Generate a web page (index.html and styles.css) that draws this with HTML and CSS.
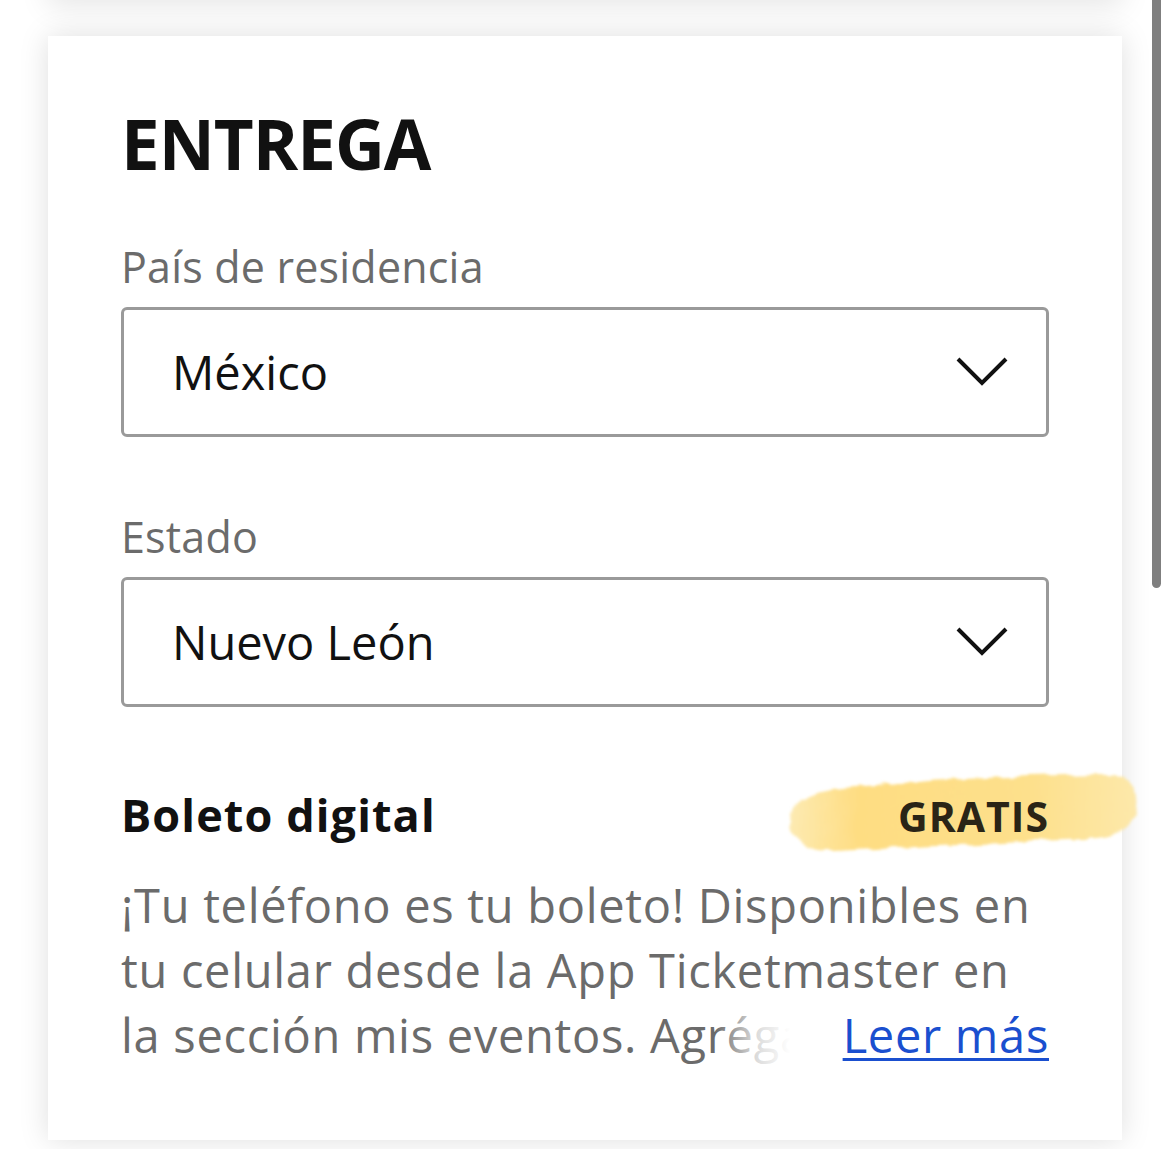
FILE: index.html
```html
<!DOCTYPE html>
<html lang="es">
<head>
<meta charset="utf-8">
<title>Entrega</title>
<link rel="stylesheet" href="styles.css">
</head>
<body>
<div class="page">
  <div class="prev-card"></div>
  <section class="card">
    <h1 class="title">ENTREGA</h1>

    <div class="field">
      <label class="label">País de residencia</label>
      <div class="select">
        <span class="value">México</span>
        <svg class="chev" width="52" height="30" viewBox="0 0 52 30"><path d="M2 2 L26 26 L50 2" fill="none" stroke="#111" stroke-width="4"/></svg>
      </div>
    </div>

    <div class="field">
      <label class="label">Estado</label>
      <div class="select">
        <span class="value">Nuevo León</span>
        <svg class="chev" width="52" height="30" viewBox="0 0 52 30"><path d="M2 2 L26 26 L50 2" fill="none" stroke="#111" stroke-width="4"/></svg>
      </div>
    </div>

    <div class="delivery">
      <div class="delivery-head">
        <svg class="brush" width="358" height="86" viewBox="0 0 358 86">
          <defs>
            <filter id="rough" x="-5%" y="-10%" width="110%" height="120%">
              <feTurbulence type="fractalNoise" baseFrequency="0.06" numOctaves="3" seed="4" result="n"/>
              <feDisplacementMap in="SourceGraphic" in2="n" scale="7" xChannelSelector="R" yChannelSelector="G" result="d"/>
              <feGaussianBlur in="d" stdDeviation="1.6"/>
            </filter>
            <linearGradient id="ink" x1="0" y1="0" x2="1" y2="0">
              <stop offset="0" stop-color="#fdeab2"/>
              <stop offset="0.2" stop-color="#fedd82"/>
              <stop offset="0.7" stop-color="#fde08c"/>
              <stop offset="1" stop-color="#fde8aa"/>
            </linearGradient>
          </defs>
          <path filter="url(#rough)" fill="url(#ink)" d="M5 54 C5 34 22 24 60 19 C140 11 230 7 322 5 C348 5 354 22 352 38 C350 60 338 68 300 70 C220 74 130 78 52 82 C22 83 5 72 5 54 Z"/>
        </svg>
        <h2 class="delivery-name">Boleto digital</h2>
        <span class="price">GRATIS</span>
      </div>
      <div class="desc-wrap">
        <p class="desc">¡Tu teléfono es tu boleto! Disponibles en tu celular desde la App Ticketmaster en la sección mis eventos. Agrégalos a tu Wallet y preséntalos en la entrada del recinto.</p>
        <span class="more"><a href="#" class="more-link">Leer más</a></span>
      </div>
    </div>
  </section>
</div>
<div class="scrollbar"></div>
</body>
</html>
```

FILE: styles.css
```css
html, body {
  margin: 0;
  padding: 0;
  background: #ffffff;
  overflow: hidden;
}
body {
  font-family: "Open Sans", "Noto Sans", sans-serif;
  height: 1149px;
}
.page {
  padding: 0 48px;
}
.prev-card {
  height: 40px;
  margin-top: -40px;
  background: #fff;
  box-shadow: 0 6px 30px rgba(0,0,0,0.10);
}
.card {
  margin-top: 36px;
  background: #fff;
  box-shadow: 0 0 28px rgba(0,0,0,0.13);
  padding: 72px 73px 60px 73px;
  height: 1104px;
  box-sizing: border-box;
}
.title {
  margin: 0;
  font-size: 69px;
  font-weight: 700;
  letter-spacing: -1px;
  color: #111;
  line-height: 70px;
}
.title + .field {
  margin-top: 67px;
}
.field + .field {
  margin-top: 78px;
}
.label {
  display: block;
  font-size: 43px;
  color: #6b6b6b;
  line-height: 43px;
  letter-spacing: 0.2px;
  margin-bottom: 19px;
}
.select {
  height: 130px;
  box-sizing: border-box;
  border: 3px solid #9a9a9a;
  border-radius: 6px;
  display: flex;
  align-items: center;
  justify-content: space-between;
  padding: 0 38px 0 48px;
}
.value {
  font-size: 47px;
  color: #111;
}
.chev {
  display: block;
}
.delivery {
  margin-top: 85px;
}
.delivery-head {
  position: relative;
  display: flex;
  justify-content: space-between;
  align-items: baseline;
}
.brush {
  position: absolute;
  right: -93px;
  top: -23px;
}
.delivery-name {
  position: relative;
  margin: 0;
  font-size: 45px;
  font-weight: 700;
  color: #111;
  letter-spacing: 1.1px;
  line-height: 45px;
}
.price {
  position: relative;
  font-size: 41px;
  font-weight: 700;
  letter-spacing: 1px;
  color: #2a2416;
  line-height: 45px;
}
.desc-wrap {
  position: relative;
  margin-top: 34px;
}
.desc {
  margin: 0;
  font-size: 47px;
  line-height: 65px;
  height: 195px;
  overflow: hidden;
  color: #6b6b6b;
  letter-spacing: 0.7px;
}
.more {
  position: absolute;
  right: 0;
  bottom: 0;
  height: 65px;
  padding-left: 128px;
  background: linear-gradient(to right, rgba(255,255,255,0) 0, rgba(255,255,255,0.75) 40px, #fff 75px);
  font-size: 47px;
  line-height: 65px;
  letter-spacing: 0.7px;
}
.more-link {
  color: #1a4fcf;
  text-decoration: underline;
  text-decoration-thickness: 3px;
  text-underline-offset: 5px;
}
.scrollbar {
  position: absolute;
  top: 0;
  left: 1152px;
  width: 9px;
  height: 588px;
  background: #7f7f7f;
  border-radius: 0 0 5px 5px;
}
```
